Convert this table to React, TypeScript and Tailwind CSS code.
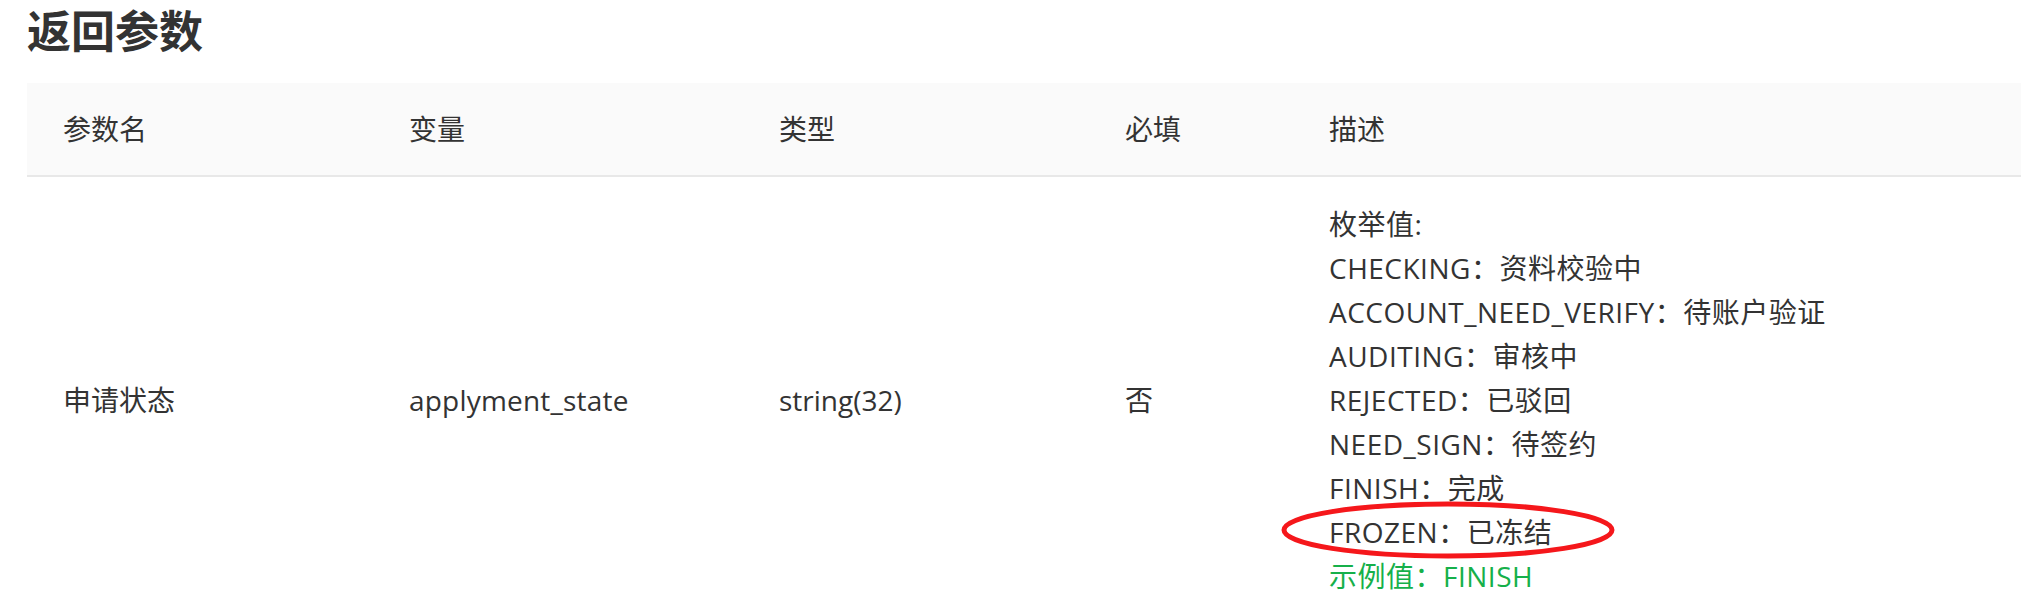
import React from "react";

const enumLines = [
  "CHECKING：资料校验中",
  "ACCOUNT_NEED_VERIFY：待账户验证",
  "AUDITING：审核中",
  "REJECTED：已驳回",
  "NEED_SIGN：待签约",
  "FINISH：完成",
];

export default function App() {
  return (
    <div
      className="w-full bg-white pl-[27px] text-[#333333]"
      style={{ fontFamily: "'Open Sans','Noto Sans CJK SC',sans-serif" }}
    >
      <h2
        className="h-[58px] text-[44px] font-bold leading-[58px] text-[#333333]"
        style={{ fontFamily: "'Noto Sans CJK SC',sans-serif" }}
      >
        返回参数
      </h2>
      <div className="mt-[25px] w-full text-[28px]">
        <div className="grid h-[94px] grid-cols-[346px_370px_346px_204px_1fr] items-center border-b-2 border-[#e8e8e8] bg-[#fafafa]">
          <div className="pl-[36px]">参数名</div>
          <div className="pl-[36px]">变量</div>
          <div className="pl-[36px]">类型</div>
          <div className="pl-[36px]">必填</div>
          <div className="pl-[36px]">描述</div>
        </div>
        <div className="grid grid-cols-[346px_370px_346px_204px_1fr] items-center">
          <div className="pl-[36px]">申请状态</div>
          <div className="pl-[36px] tracking-[0.2px]">applyment_state</div>
          <div className="pl-[36px]">string(32)</div>
          <div className="pl-[36px]">否</div>
          <div className="py-[25px] pl-[36px] leading-[44px] tracking-[0.5px]">
            <div>枚举值:</div>
            {enumLines.map((l) => (
              <div key={l}>{l}</div>
            ))}
            <div className="relative">
              FROZEN：已冻结
              <svg
                className="pointer-events-none absolute left-[-49px] top-[-9px]"
                width="338"
                height="60"
                viewBox="0 0 338 60"
              >
                <ellipse
                  cx="168"
                  cy="29"
                  rx="164"
                  ry="26"
                  fill="none"
                  stroke="#f5171b"
                  strokeWidth="5"
                />
              </svg>
            </div>
            <div className="text-[#16b04a]">示例值：FINISH</div>
          </div>
        </div>
      </div>
    </div>
  );
}
